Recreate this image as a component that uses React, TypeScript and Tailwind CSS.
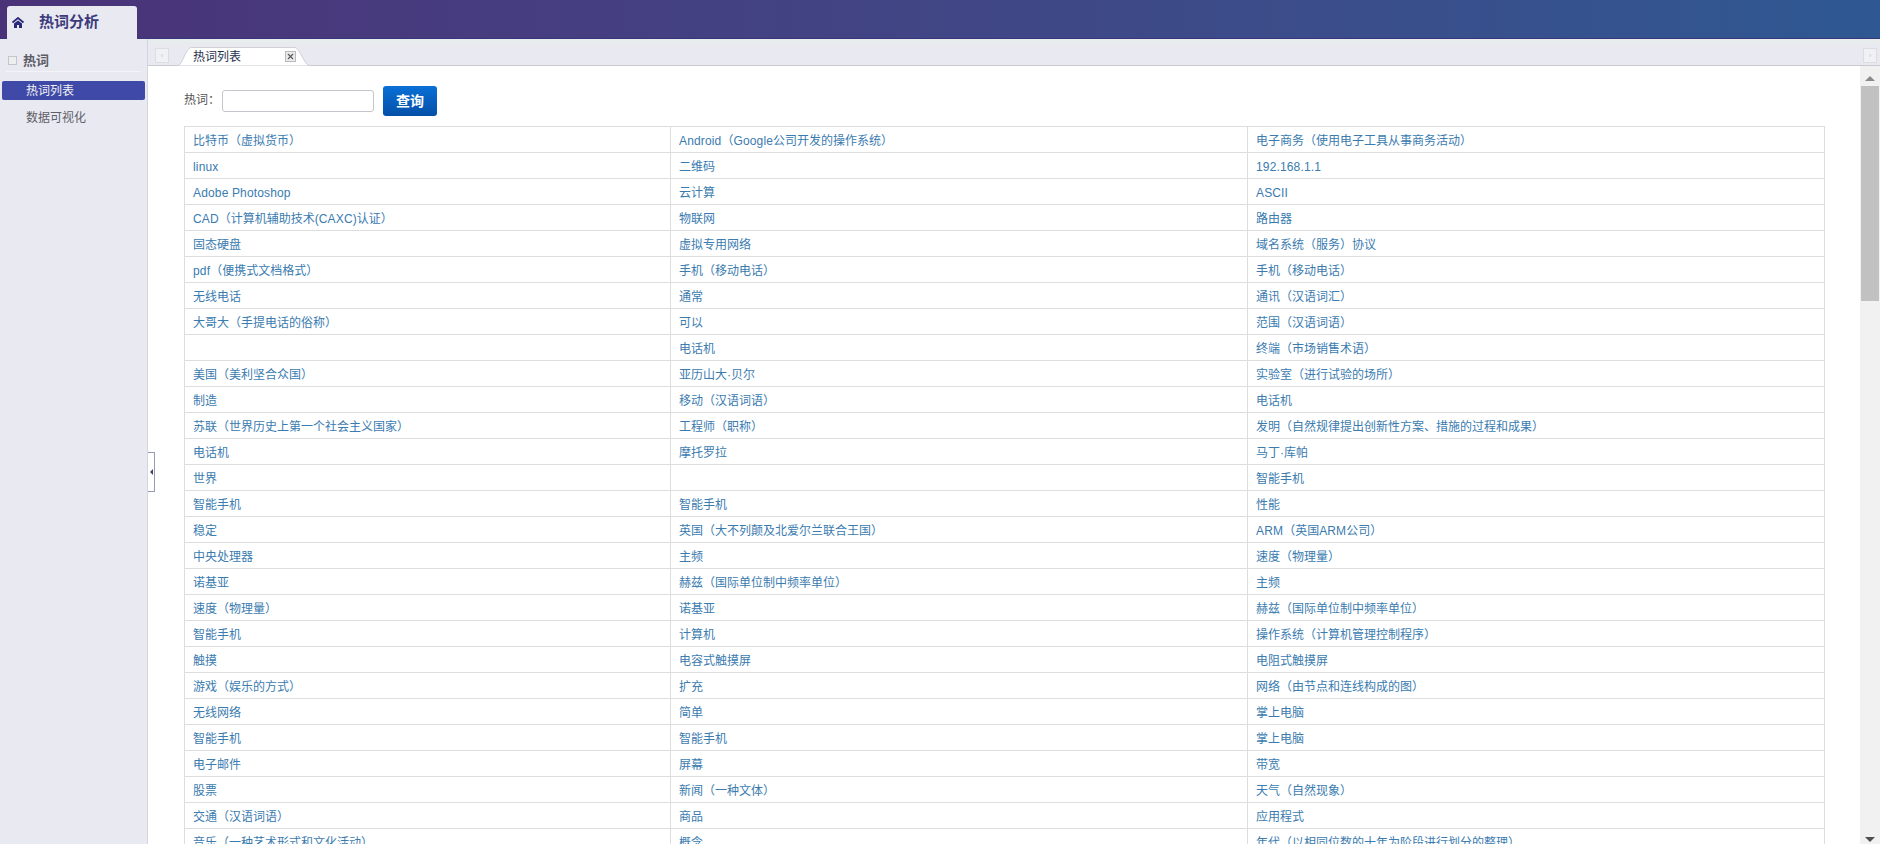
import { X } from "lucide-react";

const rows = [
  ["比特币（虚拟货币）", "Android（Google公司开发的操作系统）", "电子商务（使用电子工具从事商务活动）"],
  ["linux", "二维码", "192.168.1.1"],
  ["Adobe Photoshop", "云计算", "ASCII"],
  ["CAD（计算机辅助技术(CAXC)认证）", "物联网", "路由器"],
  ["固态硬盘", "虚拟专用网络", "域名系统（服务）协议"],
  ["pdf（便携式文档格式）", "手机（移动电话）", "手机（移动电话）"],
  ["无线电话", "通常", "通讯（汉语词汇）"],
  ["大哥大（手提电话的俗称）", "可以", "范围（汉语词语）"],
  ["", "电话机", "终端（市场销售术语）"],
  ["美国（美利坚合众国）", "亚历山大·贝尔", "实验室（进行试验的场所）"],
  ["制造", "移动（汉语词语）", "电话机"],
  ["苏联（世界历史上第一个社会主义国家）", "工程师（职称）", "发明（自然规律提出创新性方案、措施的过程和成果）"],
  ["电话机", "摩托罗拉", "马丁·库帕"],
  ["世界", "", "智能手机"],
  ["智能手机", "智能手机", "性能"],
  ["稳定", "英国（大不列颠及北爱尔兰联合王国）", "ARM（英国ARM公司）"],
  ["中央处理器", "主频", "速度（物理量）"],
  ["诺基亚", "赫兹（国际单位制中频率单位）", "主频"],
  ["速度（物理量）", "诺基亚", "赫兹（国际单位制中频率单位）"],
  ["智能手机", "计算机", "操作系统（计算机管理控制程序）"],
  ["触摸", "电容式触摸屏", "电阻式触摸屏"],
  ["游戏（娱乐的方式）", "扩充", "网络（由节点和连线构成的图）"],
  ["无线网络", "简单", "掌上电脑"],
  ["智能手机", "智能手机", "掌上电脑"],
  ["电子邮件", "屏幕", "带宽"],
  ["股票", "新闻（一种文体）", "天气（自然现象）"],
  ["交通（汉语词语）", "商品", "应用程式"],
  ["音乐（一种艺术形式和文化活动）", "概念", "年代（以相同位数的十年为阶段进行划分的整理）"],
];

// latin runs are a touch wider than the cjk around them
function CellText({ text }: { text: string }) {
  const parts = text.split(/([A-Za-z0-9. ]+)/).filter(Boolean);
  return (
    <>
      {parts.map((part, i) =>
        /^[A-Za-z0-9. ]+$/.test(part) ? (
          <span key={i} className="tracking-[0.15px]">
            {part}
          </span>
        ) : (
          <span key={i}>{part}</span>
        ),
      )}
    </>
  );
}

function HomeIcon() {
  return (
    <svg width="12" height="11" viewBox="0 0 12 11" className="shrink-0">
      <path d="M0.5 5.5 6 1l5.5 4.5" fill="none" stroke="#2a2878" strokeWidth="1.8" />
      <path d="M2 6.5 6 3.4l4 3.1V11H7V8H5v3H2z" fill="#2a2878" />
    </svg>
  );
}

export default function App() {
  return (
    <div className="flex h-[844px] w-[1880px] flex-col overflow-hidden bg-[#e9e9f1] font-['Liberation_Sans','Noto_Sans_CJK_SC',sans-serif] text-[12px] text-[#333]">
      <header className="flex h-[39px] shrink-0 items-end border-b border-[#3a3480] bg-gradient-to-r from-[#4a3278] to-[#2e5892] pl-[7px]">
        <div className="-mb-px flex h-[33px] w-[130px] items-center rounded-t-[3px] bg-[#e9e9f1] pl-[5px] text-[#3c3a7c]">
          <HomeIcon />
          <span className="ml-[15px] text-[15px] font-bold">热词分析</span>
        </div>
      </header>

      <div className="relative flex min-h-0 flex-1">
        <aside className="w-[148px] shrink-0 border-r border-[#d5d5de]">
          <div className="mx-[6px] flex h-[33px] items-center border-b border-[#f3f3f8] pt-[11px]">
            <span className="ml-[2px] h-[9px] w-[9px] border border-[#c4c4cc] bg-[#eeeeee]" />
            <span className="ml-[6px] text-[13px] font-bold text-[#5b5b66]">热词</span>
          </div>
          <div className="mt-[9px] px-[2px]">
            <div className="flex h-[19px] items-center rounded-[2px] bg-[#3f4aa8] pl-[24px] pt-[1px] text-[#f2f2f2]">热词列表</div>
            <div className="mt-[9px] pl-[24px] text-[#5f5f68]">数据可视化</div>
          </div>
        </aside>

        <button className="absolute left-[148px] top-[413px] z-10 flex h-[40px] w-[7px] items-center justify-center border border-l-0 border-[#8f9fb0] bg-white">
          <span className="h-0 w-0 border-y-[3px] border-r-[3px] border-y-transparent border-r-[#3a4660]" />
        </button>

        <main className="flex min-w-0 flex-1 flex-col">
          <div className="flex h-[27px] shrink-0 items-end border-b border-[#c9c9d0] bg-gradient-to-b from-[#e6eeea] to-[#e9e9f1] to-[30%]">
            <span className="mb-[2px] ml-[7px] flex h-[15px] w-[14px] items-center justify-center border border-[#dcdce2] bg-[#f1f1f5] text-[8px] leading-none text-[#c8c8d0]">‹</span>
            <div className="relative -mb-px ml-[8px] flex h-[19px] w-[134px] items-center">
              <svg width="134" height="19" viewBox="0 0 134 19" className="absolute inset-0">
                <path d="M0 18.5h1C5 18.5 9 1 14 .5H118c5 .5 9 18 15 18h1" fill="#fff" stroke="#d0d0d6" />
              </svg>
              <span className="relative ml-[16px] text-[#26324d]">热词列表</span>
              <span className="relative ml-[44px] flex h-[11px] w-[11px] items-center justify-center border border-[#b9b9c0] bg-[#eaeaea]">
                <X size={9} strokeWidth={3} className="text-[#555]" />
              </span>
            </div>
            <span className="mb-[2px] ml-auto mr-[3px] flex h-[15px] w-[14px] items-center justify-center border border-[#dcdce2] bg-[#f1f1f5] text-[8px] leading-none text-[#c8c8d0]">›</span>
          </div>

          <div className="flex min-h-0 flex-1 bg-white">
            <div className="min-w-0 flex-1 overflow-hidden pl-[36px] pr-[36px]">
              <div className="flex h-[60px] items-center pt-[10px]">
                <span className="w-[38px] -translate-y-px text-[#555]">热词：</span>
                <input className="h-[22px] w-[152px] rounded-[3px] border border-[#c4c4cc] bg-white" />
                <button className="ml-[9px] h-[30px] w-[54px] rounded-[3px] bg-gradient-to-b from-[#0a70d6] to-[#0550a8] text-[14px] font-bold text-white">查询</button>
              </div>
              <table className="w-[1640px] table-fixed border-collapse [text-spacing-trim:space-all]">
                <colgroup>
                  <col className="w-[486px]" />
                  <col className="w-[577px]" />
                  <col className="w-[577px]" />
                </colgroup>
                <tbody>
                  {rows.map((row, i) => (
                    <tr key={i} className="h-[26px]">
                      {row.map((cell, j) => (
                        <td key={j} className="border border-[#dddddd] px-[8px] pb-0 pt-[3px] text-[#3a7bb0]">
                          <CellText text={cell} />
                        </td>
                      ))}
                    </tr>
                  ))}
                </tbody>
              </table>
            </div>

            <div className="flex w-[20px] shrink-0 flex-col items-center bg-[#f1f1f1]">
              <span className="mt-[10px] h-0 w-0 border-x-[5px] border-b-[5px] border-x-transparent border-b-[#8a8a8a]" />
              <span className="mt-[5px] h-[215px] w-[18px] bg-[#c1c1c1]" />
              <span className="mb-[2px] mt-auto h-0 w-0 border-x-[5px] border-t-[5px] border-x-transparent border-t-[#505050]" />
            </div>
          </div>
        </main>
      </div>
    </div>
  );
}
